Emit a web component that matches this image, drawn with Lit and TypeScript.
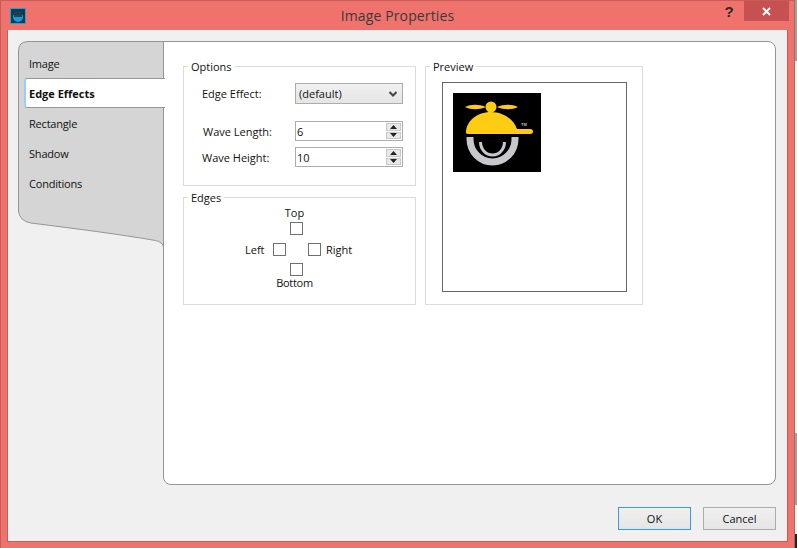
import { LitElement, css, html } from "lit";
import { customElement } from "lit/decorators.js";

const TABS = ["Image", "Edge Effects", "Rectangle", "Shadow", "Conditions"];

@customElement("app-root")
export class AppRoot extends LitElement {
    private spin(value: string) {
        return html`
            <div class="spin">
                <span>${value}</span>
                <div class="arrows">
                    <i><svg width="7" height="4" viewBox="0 0 7 4"><path d="M3.5 0 7 4H0z" fill="#222"/></svg></i>
                    <i><svg width="7" height="4" viewBox="0 0 7 4"><path d="M0 0h7L3.5 4z" fill="#222"/></svg></i>
                </div>
            </div>
        `;
    }

    private logo() {
        return html`
            <svg class="logo" width="88" height="79" viewBox="0 0 88 79">
                <rect width="88" height="79" fill="#000"/>
                <path d="M12 14c6-3 14-3 21 0-7 3-15 3-21 0zM44 14c7-3 15-3 21 0-6 3-14 3-21 0z" fill="#ffcc14"/>
                <circle cx="38" cy="14" r="5.500" fill="#ffcc14"/>
                <path d="M13 40C13 28 24 19 38 19 51 19 61 27 64 36H77Q80 36 80 38.500 80 41 77 41H16Q13 41 13 40z" fill="#ffcc14"/>
                <text x="68" y="33" font-size="4" font-weight="700" fill="#bbb" font-family="Liberation Sans, sans-serif">TM</text>
                <path d="M17 44v2a22.500 23 0 0 0 45 0v-2" fill="none" stroke="#c8c8cc" stroke-width="7"/>
                <path d="M27.500 49a12 13 0 0 0 24 0" fill="none" stroke="#c8c8cc" stroke-width="3"/>
            </svg>
        `;
    }

    protected override render() {
        return html`
            <div class="window">
                <header class="titlebar">
                    <div class="app-icon">
                        <svg width="14" height="14" viewBox="0 0 14 14">
                            <rect width="14" height="14" fill="#123a4c"/>
                            <circle cx="7" cy="8" r="5" fill="#1d9ad6"/>
                            <path d="M2 6c1-4 9-4 10 0z" fill="#1c3c4c"/>
                            <path d="M3 7h8" stroke="#10303f" stroke-width="1.500"/>
                        </svg>
                    </div>
                    <div class="title">Image Properties</div>
                    <div class="help">?</div>
                    <div class="close">
                        <svg width="9" height="9" viewBox="0 0 9 9"><path d="M1 1l7 7M8 1 1 8" stroke="#fff" stroke-width="2"/></svg>
                    </div>
                </header>
                <div class="client">
                    <div class="main">
                        <nav class="tabs">
                            <svg class="tabs-bg" width="147" height="206" viewBox="0 0 147 206">
                                <path d="M.5 170V10Q.5.5 10 .5H145.500V206q-1-5-8-6.500C100 193 60 188 13 182Q1.500 180 .5 170z" fill="#d5d5d5"/>
                                <path d="M.5 170V10Q.5.5 10 .5H145.500V206q-1-5-8-6.500C100 193 60 188 13 182Q1.500 180 .5 170" fill="none" stroke="#959595"/>
                            </svg>
                            ${TABS.map(
                                (t, i) => html`<div class="tab ${i === 1 ? "active" : ""}">${t}</div>`
                            )}
                        </nav>
                        <section class="panel">
                            <div class="left-col">
                                <fieldset class="options">
                                    <legend>Options</legend>
                                    <div class="options-body">
                                        <div class="row effect">
                                            <label>Edge Effect:</label>
                                            <div class="select">
                                                <span>(default)</span>
                                                <svg width="8" height="6" viewBox="0 0 8 6"><path d="M.5 1 4 4.500 7.500 1" fill="none" stroke="#444" stroke-width="2"/></svg>
                                            </div>
                                        </div>
                                        <div class="row wave-l">
                                            <label>Wave Length:</label>
                                            ${this.spin("6")}
                                        </div>
                                        <div class="row wave-h">
                                            <label>Wave Height:</label>
                                            ${this.spin("10")}
                                        </div>
                                    </div>
                                </fieldset>
                                <fieldset class="edges">
                                    <legend>Edges</legend>
                                    <div class="edge-grid">
                                        <div class="top-l">Top</div>
                                        <div class="cb top-c"></div>
                                        <div class="left-l">Left</div>
                                        <div class="cb left-c"></div>
                                        <div class="cb right-c"></div>
                                        <div class="right-l">Right</div>
                                        <div class="cb bottom-c"></div>
                                        <div class="bottom-l">Bottom</div>
                                    </div>
                                </fieldset>
                            </div>
                            <fieldset class="preview">
                                <legend>Preview</legend>
                                <div class="page">${this.logo()}</div>
                            </fieldset>
                        </section>
                    </div>
                    <footer class="buttons">
                        <button class="btn default">OK</button>
                        <button class="btn">Cancel</button>
                    </footer>
                </div>
            </div>
            <div class="backdrop"></div>
        `;
    }

    static styles = css`
        :host {
            display: flex;
            width: 797px;
            height: 548px;
            overflow: hidden;
            font-family: "Open Sans", "Noto Sans", sans-serif;
            font-size: 11px;
            color: #111;
        }

        .backdrop {
            width: 2px;
            flex: none;
            background: linear-gradient(
                #a0a0a0 0 61px,
                #f0f0f0 61px 433px,
                #a0a0a0 433px 505px,
                #f0f0f0 505px 534px,
                #222 534px
            );
        }

        .window {
            box-sizing: border-box;
            width: 795px;
            flex: none;
            height: 548px;
            background: #f0726c;
            border-top: 1px solid #c45c58;
            border-left: 1px solid #c45c58;
            border-right: 1px solid #c45c58;
            display: flex;
            flex-direction: column;
        }

        .titlebar {
            height: 29px;
            flex: none;
            display: flex;
            align-items: flex-start;
            position: relative;
        }

        .app-icon {
            margin: 7px 0 0 9px;
            width: 14px;
            height: 14px;
            border: 1px solid #1aa3dc;
            line-height: 0;
        }

        .title {
            position: absolute;
            left: 0;
            right: 0;
            top: 5px;
            text-align: center;
            font-size: 14px;
            letter-spacing: 0.13px;
            line-height: 19px;
            color: #3a3a3a;
        }

        .help {
            margin-left: auto;
            width: 14px;
            font: bold 15px/14px "Liberation Sans", sans-serif;
            color: #2a2a2a;
            text-align: center;
            margin-top: 4px;
            margin-right: 8px;
        }

        .close {
            width: 45px;
            height: 20px;
            margin-right: 5px;
            background: #c75050;
            display: flex;
            align-items: center;
            justify-content: center;
        }

        .client {
            box-sizing: border-box;
            width: 781px;
            height: 512px;
            margin-left: 6px;
            background: #f0f0f0;
            border-left: 1px solid #c45c58;
            border-right: 1px solid #c45c58;
            border-bottom: 1px solid #c45c58;
            padding: 11px 11px 0 10px;
            display: flex;
            flex-direction: column;
        }

        .main {
            height: 444px;
            flex: none;
            display: flex;
            align-items: stretch;
        }

        .tabs {
            width: 146px;
            flex: none;
            position: relative;
            padding-top: 8px;
            display: flex;
            flex-direction: column;
            z-index: 1;
        }

        .tabs-bg {
            position: absolute;
            left: 0;
            top: 0;
        }

        .tab {
            position: relative;
            height: 30px;
            line-height: 29px;
            padding-left: 11px;
            letter-spacing: -0.2px;
            box-sizing: border-box;
        }

        .tab.active {
            margin: -1px -1px 1px 6px;
            padding-left: 3px;
            letter-spacing: 0;
            background: #fff;
            font-weight: 700;
            border-top: 1px solid #959595;
            border-bottom: 1px solid #959595;
            border-left: 2px solid #99ccff;
            border-radius: 3px 0 0 3px;
        }

        .panel {
            flex: 1;
            margin-left: -1px;
            box-sizing: border-box;
            background: #fff;
            border: 1px solid #959595;
            border-radius: 0 8px 8px 8px;
            padding: 18px 0 0 19px;
            display: flex;
            align-items: flex-start;
            gap: 9px;
        }

        .left-col {
            width: 233px;
            display: flex;
            flex-direction: column;
            gap: 5px;
        }

        fieldset {
            margin: 0;
            box-sizing: border-box;
            min-width: 0;
            border: 1px solid #dcdcdc;
            padding: 0;
        }

        legend {
            margin-left: 4px;
            padding: 0 3px;
            line-height: 13px;
            height: 13px;
            font-size: 11px;
        }

        .options {
            height: 126px;
        }

        .options-body {
            padding: 10px 12px 0 18px;
        }

        .row {
            display: flex;
            align-items: center;
        }

        .row label {
            flex: 1;
        }

        .effect {
            height: 21px;
        }

        .wave-l {
            margin-top: 17px;
            height: 20px;
        }

        .wave-h {
            margin-top: 6px;
            height: 20px;
        }

        .wave-l label {
            padding-left: 1px;
        }

        .select {
            box-sizing: border-box;
            width: 108px;
            height: 21px;
            flex: none;
            border: 1px solid #acacac;
            background: linear-gradient(#f0f0f0, #e5e5e5);
            display: flex;
            align-items: center;
            justify-content: space-between;
            padding: 0 5px 0 3px;
        }

        .spin {
            box-sizing: border-box;
            width: 108px;
            height: 20px;
            flex: none;
            border: 1px solid #acacac;
            background: #fff;
            display: flex;
            align-items: center;
            justify-content: space-between;
            padding: 0 1px;
        }

        .arrows {
            width: 15px;
            height: 16px;
            display: flex;
            flex-direction: column;
            gap: 1px;
        }

        .arrows i {
            flex: 1;
            background: #e8e8e8;
            border: 1px solid #c8c8c8;
            display: flex;
            align-items: center;
            justify-content: center;
            box-sizing: border-box;
        }

        .edges {
            height: 114px;
        }

        .edge-grid {
            display: grid;
            grid-template-columns: 61px 28px 13px 4px 13px 5px 13px 5px 30px;
            grid-template-rows: 16px 14px 7px 14px 6px 13px 14px;
            padding-top: 2px;
            line-height: 14px;
            white-space: nowrap;
        }

        .cb {
            box-sizing: border-box;
            width: 13px;
            height: 13px;
            border: 1px solid #707070;
            background: #fff;
        }

        .top-l {
            grid-row: 1;
            grid-column: 4 / 6;
            justify-self: center;
        }

        .top-c {
            grid-row: 2;
            grid-column: 5;
        }

        .left-l {
            grid-row: 4;
            grid-column: 2;
        }

        .left-c {
            grid-row: 4;
            grid-column: 3;
        }

        .right-c {
            grid-row: 4;
            grid-column: 7;
        }

        .right-l {
            grid-row: 4;
            grid-column: 9;
        }

        .bottom-c {
            grid-row: 6;
            grid-column: 5;
        }

        .bottom-l {
            grid-row: 7;
            grid-column: 4 / 6;
            justify-self: center;
            letter-spacing: -0.3px;
        }

        .preview {
            width: 218px;
            height: 245px;
        }

        .page {
            box-sizing: border-box;
            width: 185px;
            height: 210px;
            margin: 9px 0 0 16px;
            border: 1px solid #666;
            padding: 10px;
        }

        .logo {
            display: block;
        }

        .buttons {
            display: flex;
            justify-content: flex-end;
            gap: 12px;
            margin-top: 22px;
        }

        .btn {
            box-sizing: border-box;
            width: 73px;
            height: 23px;
            border: 1px solid #acacac;
            background: linear-gradient(#f0f0f0, #e5e5e5);
            font: inherit;
            color: #111;
            padding: 0;
        }

        .btn.default {
            border-color: #3399ff;
        }
    `;
}

declare global {
    interface HTMLElementTagNameMap {
        "app-root": AppRoot;
    }
}
